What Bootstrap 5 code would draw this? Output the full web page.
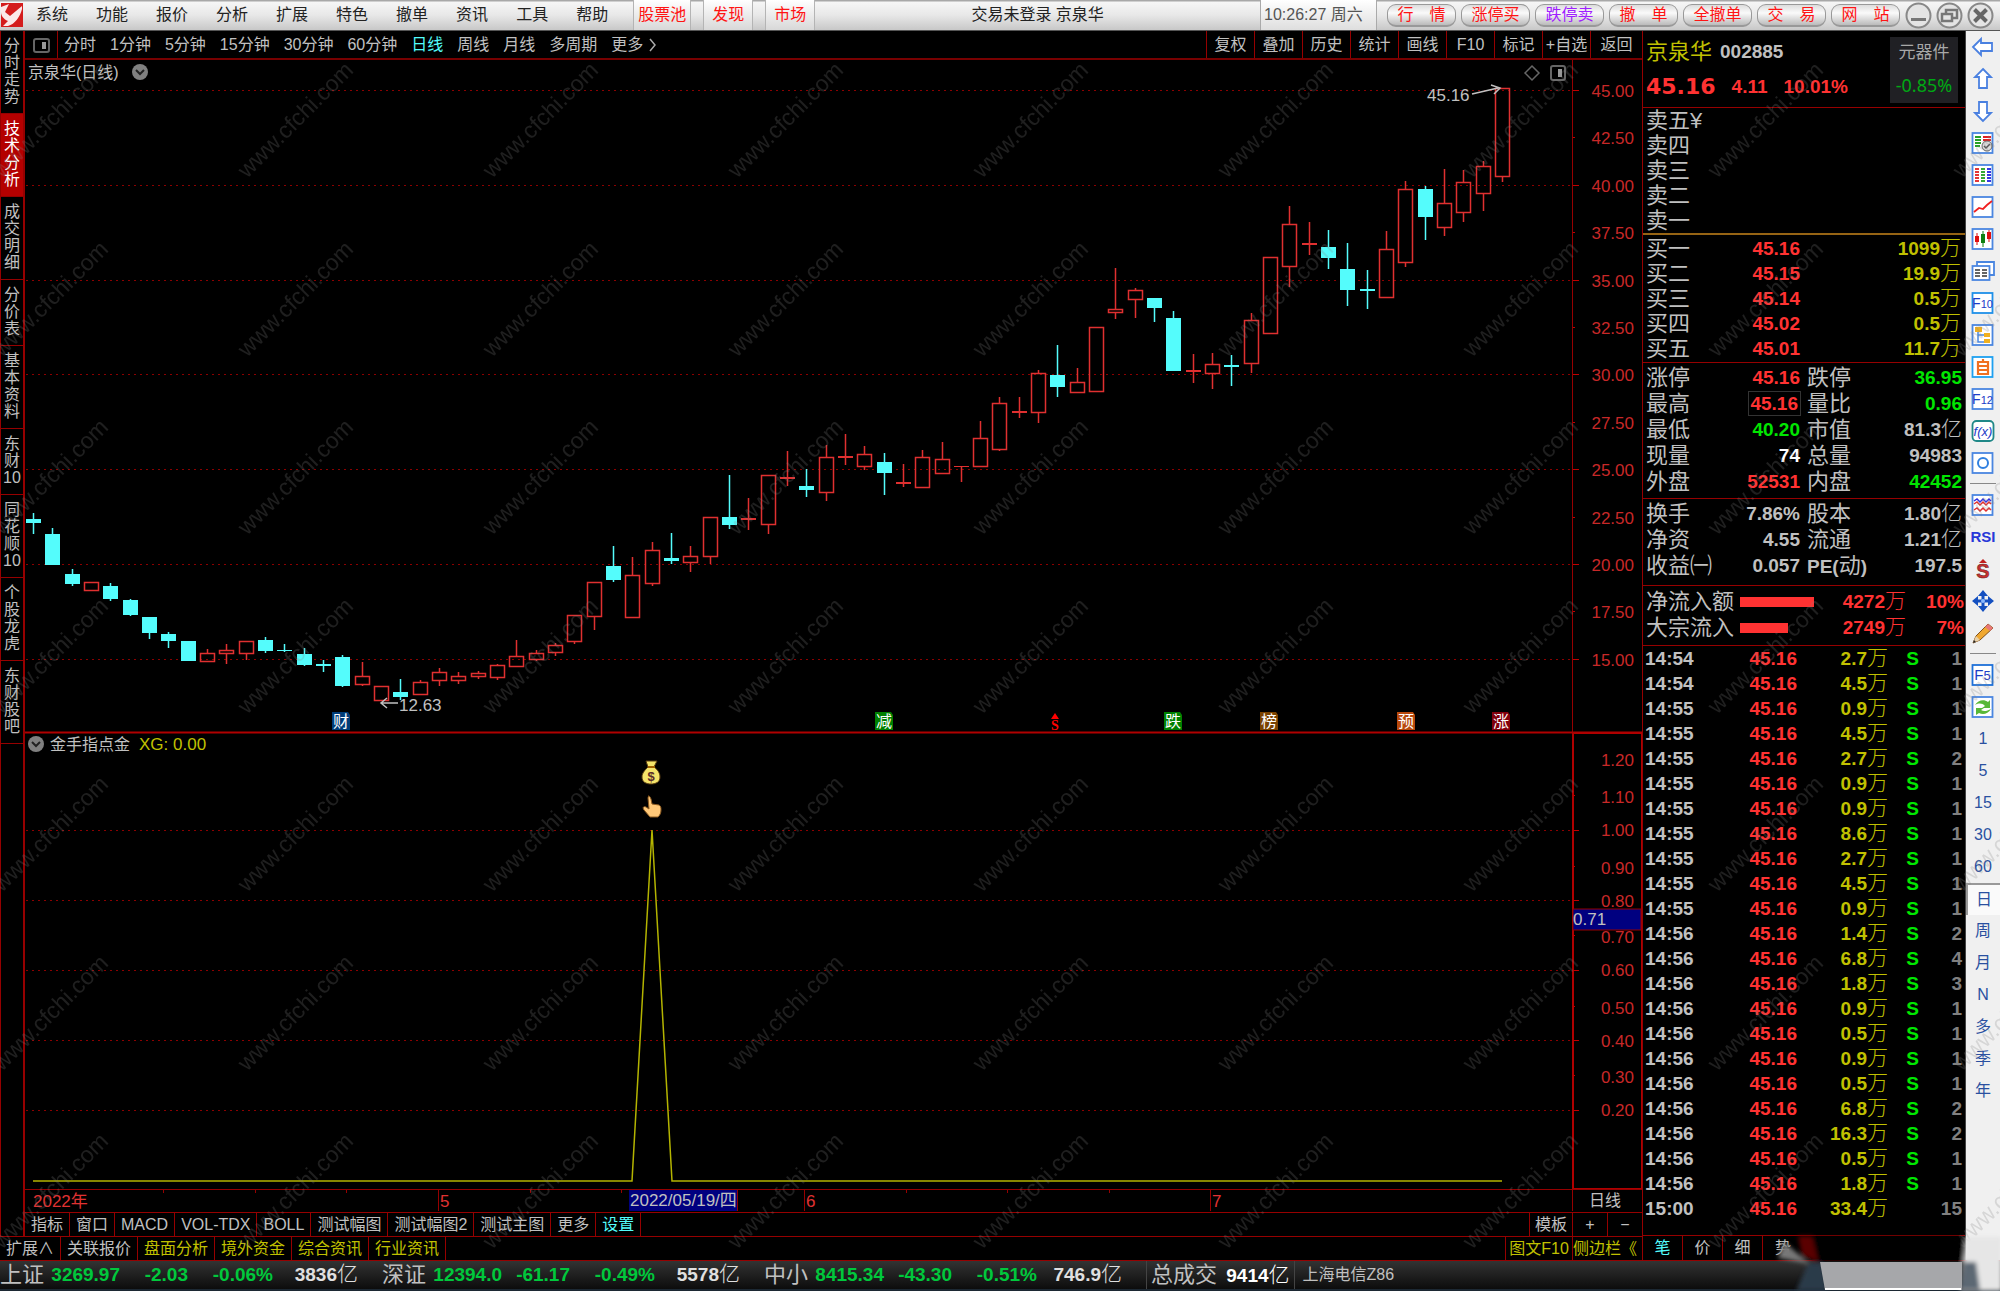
<!DOCTYPE html>
<html lang="zh-CN">
<head>
<meta charset="utf-8">
<meta name="viewport" content="width=device-width, initial-scale=1">
<title>京泉华 002885</title>
<link href="https://cdn.jsdelivr.net/npm/bootstrap@5.3.0/dist/css/bootstrap.min.css" rel="stylesheet">
<style>
:root{--edge:#960000;--txt:#c0c0c0;--up:#ff3232;--dn:#00e600;--vol:#c0c000;--cy:#54fcfc}
body{background:#000;color:var(--txt);font-family:"Liberation Sans","Noto Sans CJK SC",sans-serif;font-size:16px;line-height:24px;overflow-x:hidden}
button,a{font:inherit;color:inherit;background:none;border:0;padding:0;text-decoration:none;white-space:nowrap}
a:hover{color:inherit}
/* menu bar */
.menubar{height:31px;background:linear-gradient(#a8a8a8 0,#a8a8a8 1px,#f6f6f6 2px,#e8e8e8 50%,#c8c8c8);border-bottom:1px solid #555;color:#222}
.menus{gap:28px;padding-left:12px}
.hot{color:#ff1414;border:1px solid #b4b4b4;border-top:0;border-bottom:0;background:linear-gradient(#fff,#d8d8d8);height:30px;padding:0 8px}
.hot.tight{padding:0 4px}
.hots{gap:12px;padding-left:25px}
.clock{border-left:1px solid #aaa;border-right:1px solid #aaa;background:linear-gradient(#fff,#dedede);color:#555;width:117px;height:30px;line-height:30px;padding-left:3px}
.pill{width:69px;height:23px;line-height:20px;border:1px solid #999;border-bottom-width:2px;border-radius:9px;background:linear-gradient(#ddd,#fafafa 40%,#bbb);color:#ff1414}
.pill.sell{color:#a020ff}
.pills{gap:5px;padding-left:10px}
.wins{gap:4px;padding:0 6px 0 5px}
/* left strip */
.side{width:25px;border-right:2px solid var(--edge);border-left:1px solid var(--edge)}
.side a{display:block;width:22px;padding:6px 2px 8px 2px;line-height:17px;white-space:normal;border-bottom:1px solid var(--edge);text-align:center}
.side a.on{background:#b40000;color:#fff}
/* bars */
.period{height:29px;border-bottom:2px solid #780000}
.period nav{gap:14px;padding-left:6px}
.period .lay{width:33px;border-right:1px solid var(--edge);height:27px}
.acts button{width:48px;height:27px;border-left:1px solid var(--edge);flex:none}
.acts button:last-child{width:52px}
.cy{color:var(--cy)}
.yl{color:var(--vol)}
.tabs{border-top:1px solid var(--edge);height:24px}
.tabs button{height:23px;line-height:23px;border-right:1px solid var(--edge);padding:0 6px}
.tabs .rt button{border-right:0;border-left:1px solid var(--edge);padding:0;text-align:center}
.w37{width:43px}.w34{width:35px}.w66{width:67px}.w70{width:70px}
.plot{display:block;width:100%;height:auto}
/* quote panel */
.quote{width:324px;border-left:1px solid var(--edge);border-right:1px solid #444;flex:none}
.num{font-size:19px;font-weight:700}
.lab{font-size:22px;font-weight:400}
.quote table{width:100%;border-collapse:collapse;table-layout:fixed}
.quote th{font-weight:400;font-size:22px;padding:0 0 0 3px;white-space:nowrap;vertical-align:middle;line-height:24px}
.quote td{font-size:19px;font-weight:700;text-align:right;padding:0;white-space:nowrap;vertical-align:middle;line-height:24px}
.quote td i,.flow i,.idx i,.tot i{font-style:normal;font-weight:300;font-size:21px;line-height:1}
.book tr{height:25px}
.stat{margin-top:2px}
.stat tr{height:26px}
.head{height:77px;border-bottom:1px solid var(--edge);padding:6px 7px 3px 3px}
.big{font-family:"DejaVu Sans",sans-serif;font-weight:700;font-size:22px}
.sector{width:68px;height:66px;background:#202024;font-size:17px;text-align:center;color:#a8a8a8}
.sector b{font-family:"Noto Sans",sans-serif;font-weight:400;font-size:18px;color:#00a814}
.asks{border-bottom:2px solid #966414;margin-bottom:1px}
.bids{border-bottom:1px solid var(--edge);padding-bottom:1px}
.line{border-bottom:1px solid var(--edge);padding-top:3px}
.line.tall{padding-top:6px}
.up{color:var(--up)}.dn{color:var(--dn)}.gy{color:#808080}.wh{color:#fff}.silver{color:var(--txt)}
.frame{outline:1px solid #333;padding:1px 2px 1px 1px}
.flow{height:26px;line-height:26px}
.flow .lab{width:97px;padding-left:3px}
.flow .track{width:80px;height:10px}
.flow .track span{display:block;height:10px;background:#ff3232}
.flow .amt{width:86px;text-align:right}
.flow .pct{width:58px;text-align:right}
.modes{height:25px;border-top:1px solid var(--edge)}
.modes button{width:40px;border-right:1px solid var(--edge)}
/* tool strip */
.tools{width:34px;background:#f0f0f0;color:#2a50a0;flex:none}
.tools button{display:flex;align-items:center;justify-content:center;width:34px;height:32px}
.tools hr{margin:4px 4px 5px;border:0;height:1px;background:#888;opacity:1}
.tools .on{background:#fafafa;border-left:2px solid #999;border-top:2px solid #999}
.tools svg{width:24px;height:24px}
/* status */
.status{height:31px;border-top:1px solid var(--edge);border-bottom:2px solid #1c2833;background:linear-gradient(#333,#0c0c0c);line-height:28px}
.idx{display:grid;grid-template-columns:44px 76px 68px 85px 85px 24px}
.idx span+span{text-align:right;color:#00c83c}
.idx span.amt{color:#e0e0e0}
.sep{border-left:1px solid #444}
.veil{position:absolute;left:0;top:0;width:100%;height:100%;pointer-events:none}
.smear{position:absolute;right:0;bottom:0;width:230px;height:60px;pointer-events:none}
</style>
<script src="https://cdn.jsdelivr.net/npm/bootstrap@5.3.0/dist/js/bootstrap.bundle.min.js"></script>
</head>
<body>
<div class="position-relative d-flex flex-column min-vh-100 overflow-hidden">
<header class="menubar d-flex align-items-center">
  <svg width="24" height="26" viewBox="0 0 24 26"><rect x="1" y="1" width="22" height="24" fill="#d41c1c"/><path d="M1 5 9 2 5 10 10 14 22 4 22 7 C20 15 15 22 8 24 L3 24 8 19 C3 17 1 13 1 10Z" fill="#fff" opacity=".9"/></svg>
  <nav class="menus d-flex"><a href="#">系统</a><a href="#">功能</a><a href="#">报价</a><a href="#">分析</a><a href="#">扩展</a><a href="#">特色</a><a href="#">撤单</a><a href="#">资讯</a><a href="#">工具</a><a href="#">帮助</a></nav>
  <div class="hots d-flex"><button class="hot tight">股票池</button><button class="hot">发现</button><button class="hot">市场</button></div>
  <div class="flex-grow-1 text-center">交易未登录 京泉华</div>
  <div class="clock">10:26:27 周六</div>
  <div class="pills d-flex"><button class="pill">行　情</button><button class="pill">涨停买</button><button class="pill sell">跌停卖</button><button class="pill">撤　单</button><button class="pill">全撤单</button><button class="pill">交　易</button><button class="pill">网　站</button></div>
  <div class="wins d-flex">
    <button aria-label="最小化"><svg class="d-block" width="27" height="27" viewBox="0 0 27 27"><circle cx="13.500" cy="13.500" r="12" fill="#e4e4e4" stroke="#888" stroke-width="2"/><path d="M6 17.500h15" stroke="#777" stroke-width="3"/></svg></button>
    <button aria-label="还原"><svg class="d-block" width="27" height="27" viewBox="0 0 27 27"><circle cx="13.500" cy="13.500" r="12" fill="#e4e4e4" stroke="#888" stroke-width="2"/><path d="M10 11V8h11v8h-4M6 12h10v7H6z" fill="none" stroke="#777" stroke-width="2.500"/></svg></button>
    <button aria-label="关闭"><svg class="d-block" width="27" height="27" viewBox="0 0 27 27"><circle cx="13.500" cy="13.500" r="12" fill="#e4e4e4" stroke="#888" stroke-width="2"/><path d="M7.500 7.500l12 12m0-12l-12 12" stroke="#666" stroke-width="4"/></svg></button>
  </div>
</header>

<main class="d-flex flex-grow-1">
  <div class="d-flex flex-column flex-grow-1" style="min-width:0">
    <div class="d-flex flex-grow-1">
      <nav class="side flex-shrink-0"><a href="#">分时走势</a><a href="#" class="on">技术分析</a><a href="#">成交明细</a><a href="#">分价表</a><a href="#">基本资料</a><a href="#">东财10</a><a href="#">同花顺10</a><a href="#">个股龙虎</a><a href="#">东财股吧</a></nav>
      <div class="flex-grow-1 d-flex flex-column" style="min-width:0">
        <div class="period d-flex justify-content-between">
          <div class="d-flex align-items-center">
            <button class="lay" aria-label="布局"><svg width="17" height="15" viewBox="0 0 17 15"><rect x="1" y="1" width="15" height="13" rx="2" fill="none" stroke="#666" stroke-width="2"/><path d="M9 4h4v7H9z" fill="#999"/></svg></button>
            <nav class="d-flex"><a href="#">分时</a><a href="#">1分钟</a><a href="#">5分钟</a><a href="#">15分钟</a><a href="#">30分钟</a><a href="#">60分钟</a><a href="#" class="cy">日线</a><a href="#">周线</a><a href="#">月线</a><a href="#">多周期</a><a href="#">更多 <svg width="9" height="16" viewBox="0 0 9 16"><path d="M2 2l5 6-5 6" fill="none" stroke="#aaa" stroke-width="1.500"/></svg></a></nav>
          </div>
          <div class="acts d-flex"><button>复权</button><button>叠加</button><button>历史</button><button>统计</button><button>画线</button><button>F10</button><button>标记</button><button>+自选</button><button>返回</button></div>
        </div>
        <svg id="plot" class="plot" viewBox="25 60 1617 1151" font-family="Liberation Sans, Noto Sans CJK SC, sans-serif" font-size="17" fill="#c0c0c0"></svg>
        <div class="tabs d-flex justify-content-between mt-auto">
          <div class="d-flex"><button>指标</button><button>窗口</button><button>MACD</button><button>VOL-TDX</button><button>BOLL</button><button>测试幅图</button><button>测试幅图2</button><button>测试主图</button><button>更多</button><button class="cy">设置</button></div>
          <div class="rt d-flex"><button class="w37">模板</button><button class="w34">+</button><button class="w34">−</button></div>
        </div>
      </div>
    </div>
    <div class="tabs d-flex justify-content-between">
      <div class="d-flex"><button>扩展∧</button><button>关联报价</button><button class="yl">盘面分析</button><button class="yl">境外资金</button><button class="yl">综合资讯</button><button class="yl">行业资讯</button></div>
      <div class="rt d-flex"><button class="w66 yl">图文F10</button><button class="w70 yl text-start overflow-hidden">侧边栏《</button></div>
    </div>
  </div>

  <section class="quote d-flex flex-column">
    <div class="head d-flex justify-content-between">
      <div>
        <div class="d-flex align-items-center" style="line-height:30px"><span class="lab yl">京泉华</span><span class="num ps-2">002885</span></div>
        <div class="d-flex align-items-center up pt-2"><span class="big">45.16</span><span class="num ps-3">4.11</span><span class="num ps-3">10.01%</span></div>
      </div>
      <div class="sector pt-1">元器件<br><b class="d-block pt-2">-0.85%</b></div>
    </div>
    <table class="book"><tbody id="asks"></tbody></table><div class="asks"></div>
    <table class="book"><tbody id="bids"></tbody></table><div class="bids"></div>
    <table class="stat"><colgroup><col style="width:74px"><col style="width:83px"><col style="width:75px"><col></colgroup><tbody id="statA"></tbody></table><div class="line"></div>
    <table class="stat"><colgroup><col style="width:74px"><col style="width:83px"><col style="width:75px"><col></colgroup><tbody id="statB"></tbody></table><div class="line tall"></div>
    <div class="pb-1 line">
      <div class="flow d-flex align-items-center up"><span class="lab silver">净流入额</span><div class="track"><span style="width:74px"></span></div><span class="amt num">4272<i>万</i></span><span class="pct num">10%</span></div>
      <div class="flow d-flex align-items-center up"><span class="lab silver">大宗流入</span><div class="track"><span style="width:48px"></span></div><span class="amt num">2749<i>万</i></span><span class="pct num">7%</span></div>
    </div>
    <table class="book"><colgroup><col style="width:62px"><col style="width:92px"><col style="width:91px"><col style="width:31px"><col></colgroup><tbody id="ticks"></tbody></table>
    <div class="modes d-flex mt-auto"><button class="cy">笔</button><button>价</button><button>细</button><button class="border-0">势</button></div>
  </section>

  <nav class="tools" id="tools"></nav>
</main>

<footer class="status d-flex">
  <div class="idx num"><span class="lab">上证</span><span>3269.97</span><span>-2.03</span><span>-0.06%</span><span class="amt">3836<i>亿</i></span></div>
  <div class="idx num"><span class="lab">深证</span><span>12394.0</span><span>-61.17</span><span>-0.49%</span><span class="amt">5578<i>亿</i></span></div>
  <div class="idx num"><span class="lab">中小</span><span>8415.34</span><span>-43.30</span><span>-0.51%</span><span class="amt">746.9<i>亿</i></span></div>
  <div class="tot sep num wh ps-1"><span class="lab pe-1 silver">总成交</span> 9414<i>亿</i></div>
  <div class="sep ms-1 ps-2">上海电信Z86</div>
</footer>

<svg class="veil" aria-hidden="true"><defs><pattern id="wm" patternUnits="userSpaceOnUse" x="-25" y="27" width="245" height="357"><g fill="#808080" fill-opacity=".24" font-family="Liberation Sans, sans-serif" font-size="23"><text transform="translate(27 152) rotate(-45)">www.cfchi.com</text><text transform="translate(27 331) rotate(-45)">www.cfchi.com</text></g></pattern></defs><rect width="100%" height="100%" fill="url(#wm)"/></svg>

<svg class="smear" viewBox="1770 1231 230 60" aria-hidden="true"><defs><filter id="soft"><feGaussianBlur stdDeviation="2"/></filter></defs>
  <g filter="url(#soft)"><path d="M1812 1237h150v25h-148z" fill="#000"/><path d="M1798 1236h14l6 26-16-6z" fill="#5a0000"/><path d="M1784 1242l26 22-32-6z" fill="#777"/><path d="M1796 1291l12-28 14 0 6 28z" fill="#2b3a48"/><path d="M1966 1237h36v54h-42z" fill="#e6e6e6"/><path d="M1964 1262l12 0 4 28-20 0z" fill="#5c6873"/></g>
  <path d="M1820 1262h142v28h-137z" fill="#a6a7aa"/><path d="M1825 1288h136v2h-136z" fill="#fff"/></svg>
</div>

<script>
const R='#e03030', E='#960000', C='#54fcfc';
let s='';
const ln=(x1,y1,x2,y2,c=E,w=1,x='')=>s+=`<path d="M${x1} ${y1}L${x2} ${y2}" stroke="${c}" stroke-width="${w}" fill="none" ${x}/>`;
const tx=(x,y,t,x2='')=>s+=`<text x="${x}" y="${y}" ${x2}>${t}</text>`;
// grid and price axis
for(let i=0;i<13;i++){
  const y=Math.round(90+i*47.4)+.5, v=(45-i*2.5).toFixed(2);
  if(i%2==0){ln(26,y,1572,y,'#8c0000',1,'stroke-dasharray="2 4"');ln(1573,y,1579,y,'#c00000')} else ln(1573,y,1575,y,'#c00000');
  tx(1634,y+6,v,'text-anchor="end" fill="#c82828"');
}
ln(1572.5,60,1572.5,732);ln(25,732.5,1642,732.5,'#b00000',2);
// candles: direction, high, body top, body bottom, low
const K=`c513 519 523 534|c528 534 565 565|c569 574 584 586|r582 582 590 590|c583 586 599 601|c599 600 615 616|c617 617 633 639|c632 634 641 648|c641 641 661 661|r649 653 661 661|r644 650 653 664|r641 641 653 660|c637 640 651 653|c644 650 651 652|c648 654 665 666|c660 664 666 672|c655 657 686 687|r662 676 684 686|r686 686 700 701|c679 692 697 700|r680 682 694 695|r668 672 680 686|r672 676 680 684|r671 673 676 679|r664 665 677 680|r640 656 666 666|r650 653 659 661|r643 645 652 656|r615 615 641 644|r582 582 616 630|c546 566 580 582|r557 575 617 617|r542 550 583 586|c533 558 561 564|r546 556 562 572|r517 517 556 564|c475 517 525 529|r498 518 520 530|r475 475 524 534|r451 477 479 486|c469 486 490 497|r445 457 492 501|r434 456 458 465|r446 454 466 470|c453 462 473 495|r464 482 484 487|r450 457 487 487|r442 459 473 474|r466 466 467 482|r421 438 466 466|r397 403 449 451|r397 411 413 418|r370 373 412 423|c345 375 387 397|r368 382 392 392|r327 327 391 391|r268 309 312 319|r288 290 299 318|c298 298 308 322|c311 318 371 371|r354 370 372 383|r353 364 373 389|c355 365 367 386|r313 320 363 373|r257 257 333 333|r206 224 266 287|r222 243 245 255|c230 247 258 269|c243 269 290 306|c270 289 291 309|r231 249 297 298|r181 189 262 267|c186 189 217 240|r169 203 227 236|r170 182 212 222|r161 166 193 211|r88 88 176 182`.split('|');
K.forEach((k,i)=>{
  const [h,t,b,l]=k.slice(1).split(' ').map(Number), x=Math.round(33+i*19.33)+.5;
  const up=k[0]=='r', c=up?R:C;
  if(t>h)ln(x,h,x,t,c,1.5); if(l>b)ln(x,b,x,l,c,1.5);
  if(up&&b-t>2)s+=`<rect x="${x-7}" y="${t+.5}" width="14" height="${b-t}" fill="none" stroke="${c}" stroke-width="1.5"/>`;
  else s+=`<rect x="${x-7.5}" y="${t}" width="15" height="${Math.max(b-t,1)}" fill="${c}"/>`;
});
// header of the price pane
tx(28,78,'京泉华(日线)','font-size="16"');
const chev=(x,y)=>s+=`<circle cx="${x}" cy="${y}" r="8" fill="#808080"/><path d="M${x-4} ${y-2}l4 4 4-4" fill="none" stroke="#222" stroke-width="2"/>`;
chev(140,72);
s+=`<path d="M1532 66l7 7-7 7-7-7z" fill="none" stroke="#666" stroke-width="1.5"/><rect x="1551" y="66" width="14" height="14" rx="2" fill="none" stroke="#666" stroke-width="2"/><path d="M1558 69h4v8h-4z" fill="#999"/>`;
tx(1427,101,'45.16');s+=`<path d="M1472 94l26-6m-7-3l9 3-6 6" fill="none" stroke="#c0c0c0" stroke-width="1.5"/>`;
tx(399,711,'12.63');s+=`<path d="M381 703h17m-11-5l-6 5 6 5" fill="none" stroke="#c0c0c0" stroke-width="1.5"/>`;
[[341,'财','#003c78'],[884,'减','#008000'],[1173,'跌','#008000'],[1269,'榜','#7a4200'],[1406,'预','#b8480c'],[1501,'涨','#82000c']].forEach(([x,t,c])=>{
  s+=`<path d="M${x-9} 712h16l2 3v15h-18z" fill="${c}"/>`;tx(x,727,t,'text-anchor="middle" font-size="16" fill="#fff"');});
s+=`<path d="M1055 713l4 6h-8z" fill="#f00"/>`;tx(1055,730,'S','text-anchor="middle" font-size="14" font-weight="bold" fill="#f00" font-family="Liberation Serif"');
// indicator pane
chev(36,744);tx(50,750,'金手指点金','font-size="16"');tx(139,750,'XG: 0.00','font-size="17" fill="#c0c000"');
[830,900,970,1040,1110].forEach(y=>{ln(26,y+.5,1572,y+.5,'#8c0000',1,'stroke-dasharray="2 4"');ln(1573,y+.5,1579,y+.5,'#c00000')});
['1.20','1.10','1.00','0.90','0.80','0.70','0.60','0.50','0.40','0.30','0.20'].forEach((v,i)=>{
  const y=[760,797,830,868,901,937,970,1008,1041,1077,1110][i];tx(1634,y+6,v,'text-anchor="end" fill="#c82828"');if(i%2)ln(1573,y-1.5,1575,y-1.5,'#c00000')});
s+=`<rect x="1573" y="733" width="69" height="456" fill="none" stroke="#b00000" stroke-width="2"/><rect x="1573" y="909" width="68" height="21" fill="#000080" stroke="#960000"/>`;
tx(1573,925,'0.71');
s+=`<path d="M33 1181H632L652 830 672 1181H1502" fill="none" stroke="#b4b400" stroke-width="1.5"/>`;
s+=`<path d="M646 761h11l-3 6c4 3 6 6 6 10 0 5-4 7-9 7s-9-2-9-7c0-4 3-7 6-10z" fill="#f5e46a" stroke="#5a3c10"/><path d="M648 767h7" stroke="#a06000" stroke-width="2"/>`;
tx(651,781,'$','text-anchor="middle" font-size="13" font-weight="bold" fill="#5a2c28"');
s+=`<path d="M648 796c2 0 2 1 3 3l1 5 7 1c2 1 2 3 2 5 0 3-1 5-3 7h-8l-6-7c-2-3 0-4 2-3l3 2-1-11c0-1 1-2 0-2z" fill="#ffc878" stroke="#8c5a20"/>`;
// date axis
ln(25,1189.5,1642,1189.5);
[163,255,346,530,621,906,1007,1109].forEach(x=>ln(x+.5,1190,x+.5,1193));
[438,629,737,804,1210,1572].forEach(x=>ln(x+.5,1190,x+.5,1211));
tx(33,1207,'2022年','fill="#e03232"');tx(440,1207,'5','fill="#e03232"');tx(806,1207,'6','fill="#e03232"');tx(1212,1207,'7','fill="#e03232"');
s+=`<rect x="629" y="1190" width="108" height="21" fill="#000080"/>`;tx(630,1206,'2022/05/19/四');
tx(1605,1206,'日线','text-anchor="middle" font-size="16"');
plot.innerHTML=s;

// order book
const n=t=>t.replace(/[万亿]/,'<i>$&</i>');
asks.innerHTML='五四三二一'.split('').map((d,i)=>`<tr><th>卖${d}${i?'':'¥'}</th><td></td><td></td></tr>`).join('');
bids.innerHTML=[['一','45.16','1099万'],['二','45.15','19.9万'],['三','45.14','0.5万'],['四','45.02','0.5万'],['五','45.01','11.7万']].map(r=>`<tr><th style="width:74px">买${r[0]}</th><td class="up" style="width:83px">${r[1]}</td><td class="yl" style="padding-right:4px">${n(r[2])}</td></tr>`).join('');
const row=r=>`<tr><th>${r[0]}</th><td class="${r[2]}">${r[6]?`<span class="frame">${r[1]}</span>`:r[1]}</td><th style="padding-left:7px">${r[3]}</th><td class="${r[5]}" style="padding-right:3px">${n(r[4])}</td></tr>`;
statA.innerHTML=[['涨停','45.16','up','跌停','36.95','dn'],['最高','45.16','up','量比','0.96','dn',1],['最低','40.20','dn','市值','81.3亿',''],['现量','74','wh','总量','94983',''],['外盘','52531','up','内盘','42452','dn']].map(row).join('');
statB.innerHTML=[['换手','7.86%','','股本','1.80亿',''],['净资','4.55','','流通','1.21亿',''],['收益㈠','0.057','','<span class="num">PE(</span>动<span class="num">)</span>','197.5','']].map(row).join('');
ticks.innerHTML=`14:54 2.7 1|14:54 4.5 1|14:55 0.9 1|14:55 4.5 1|14:55 2.7 2|14:55 0.9 1|14:55 0.9 1|14:55 8.6 1|14:55 2.7 1|14:55 4.5 1|14:55 0.9 1|14:56 1.4 2|14:56 6.8 4|14:56 1.8 3|14:56 0.9 1|14:56 0.5 1|14:56 0.9 1|14:56 0.5 1|14:56 6.8 2|14:56 16.3 2|14:56 0.5 1|14:56 1.8 1|15:00 33.4 15`.split('|').map(t=>{const[a,b,c]=t.split(' ');return `<tr><td class="text-start" style="padding-left:2px">${a}</td><td class="up">45.16</td><td class="yl">${b}<i>万</i></td><td class="dn">${c==15?'':'S'}</td><td class="gy" style="padding-right:3px">${c}</td></tr>`}).join('');

// tool strip icons
const box=(inner,c='#4a86e0')=>`<svg viewBox="0 0 24 24"><rect x="1.500" y="2" width="20" height="20" fill="#fff" stroke="${c}" stroke-width="1.8"/>${inner}</svg>`;
const word=(t,z=14)=>`<text x="11.500" y="17" text-anchor="middle" font-size="${z}" fill="#1c3cc8" font-family="Liberation Sans">${t}</text>`;
const arrow=a=>`<svg viewBox="0 0 24 24"><path transform="rotate(${a} 12 12)" d="M2 12L10 4V8H21V16H10V20Z" fill="#fff" stroke="#4a80e0" stroke-width="1.8"/></svg>`;
const bars=(cs)=>cs.map((c,i)=>[6,9,12,15,18].map(y=>`<path d="M${4+i*6} ${y}h4" stroke="${c}" stroke-width="1.8"/>`).join('')).join('');
const T=[
 arrow(0),arrow(90),arrow(-90),
 box(`<path d="M4 6h6M4 9h6M4 12h6M4 15h5" stroke="#28a028" stroke-width="2"/><path d="M12 6h8M12 9h8" stroke="#e02020" stroke-width="2"/><circle cx="16" cy="15" r="5" fill="#ddd" stroke="#666"/><path d="M13 15l2 2 4-4" fill="none" stroke="#555" stroke-width="1.500"/>`),
 box(bars(['#e02020','#20a020','#2020e0'])),
 box(`<path d="M3 17l5-4 4 1 4-4 5-4" fill="none" stroke="#f02020" stroke-width="1.8"/>`),
 box(`<path d="M6 6v12M18 3v12" stroke="#e01010"/><path d="M12 4v16" stroke="#108010"/><path d="M4 9h4v6H4zM16 5h4v7h-4z" fill="#e01010"/><path d="M10 7h4v9h-4z" fill="#108010"/>`),
 `<svg viewBox="0 0 24 24"><path d="M6 7V3h17v13h-4" fill="#fff" stroke="#4a86e0" stroke-width="1.800"/><rect x="1.500" y="7" width="17" height="14" fill="#fff" stroke="#4a86e0" stroke-width="1.800"/><path d="M4 11h5m2 0h5M4 14h5m2 0h5M4 17h5m2 0h5" stroke="#333" stroke-width="1.500"/></svg>`,
 box(word('F<tspan font-size="11">10</tspan>'),'#1e90e8'),
 box(`<path d="M7 7v12h6M7 12h6" fill="none" stroke="#4a86e0" stroke-width="1.500"/><path d="M4 4h7v5H4zM13 10h6v4h-6zM13 16h6v4h-6z" fill="#f0b020"/>`),
 box(`<path d="M7 7h10v12H7zM7 11h10M7 15h10M12 4v3" fill="none" stroke="#f07020" stroke-width="2.200"/>`,'#1ea0f0'),
 box(word('F<tspan font-size="11">12</tspan>'),'#4a86e0'),
 `<svg viewBox="0 0 24 24"><rect x="1.500" y="2" width="21" height="20" rx="4" fill="#fff" stroke="#208888" stroke-width="1.800"/><text x="12" y="17" text-anchor="middle" font-size="13" font-style="italic" fill="#1c3cc8">f(x)</text></svg>`,
 box(`<circle cx="12" cy="12" r="5" fill="none" stroke="#3080e0" stroke-width="2"/>`),
 0,
 box(`<path d="M3 8l3-2 3 3 3-3 3 3 3-3 2 2" fill="none" stroke="#3030e0" stroke-width="1.500"/><path d="M3 11l3-2 3 3 3-3 3 3 3-3 2 2M3 17l3-2 3 3 3-3 3 3 3-3 2 2" fill="none" stroke="#e03030" stroke-width="1.500"/>`),
 `<b style="font-size:15px;color:#2838d8">RSI</b>`,
 `<svg viewBox="0 0 24 24"><path d="M12 2l4 4H8z" fill="#c02020"/><text x="12" y="21" text-anchor="middle" font-size="20" font-weight="bold" fill="#c83030" stroke="#662020" stroke-width=".5">S</text></svg>`,
 `<svg viewBox="0 0 24 24"><path d="M12 1l5 6H7zM12 23l5-6H7zM1 12l6-5v10zM23 12l-6-5v10z" fill="#1450c0"/><path d="M12 7v10M7 12h10" stroke="#1450c0" stroke-width="3"/><circle cx="12" cy="12" r="2" fill="#88b8ff"/></svg>`,
 `<svg viewBox="0 0 24 24"><path d="M2 22l3-7L17 3l5 4L9 19z" fill="#f0a830" stroke="#80501c"/><path d="M17 3l5 4-3 3-5-4z" fill="#e87878"/><path d="M2 22l3-7 4 4z" fill="#e8d0a8"/><path d="M2 22l1-3 2 2z" fill="#222"/></svg>`,
 0,
 box(word('F<tspan font-size="13">5</tspan>',15),'#1e70d8'),
 box(`<path d="M4 10c3-5 9-6 13-3l2-2v8h-8l3-2c-3-3-6-3-10-1zM20 14c-3 5-8 6-12 4l-3 2v-7h8l-3 2c3 2 6 1 10-1z" fill="#58b838"/>`),
 '1','5','15','30','60','日','周','月','N','多','季','年'];
tools.innerHTML=T.map(t=>t===0?'<hr>':`<button${t=='日'?' class="on"':''}>${t}</button>`).join('');
</script>
</body>
</html>
